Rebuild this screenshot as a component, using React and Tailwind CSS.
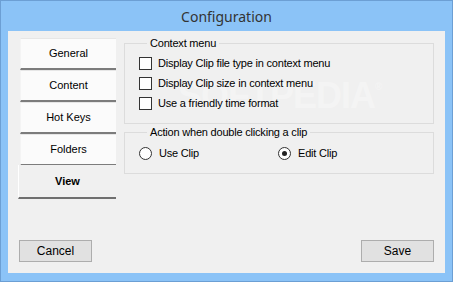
import React from 'react';

const font = { fontFamily: '"Liberation Sans", Arial, sans-serif' };

const Tab = ({ label, active }) => {
    if (active) {
        return (
            <div className="w-[98px] h-[34px] -mt-[1px] flex items-center justify-center bg-[#f0f0f0] border-l border-l-white border-b-2 border-b-[#6f6f6f] text-[11px] font-bold text-black">
                {label}
            </div>
        );
    }
    return (
        <div className="ml-[2px] w-[96px] h-[32px] flex items-center justify-center bg-[#fbfbfb] border-t border-t-[#e6e6e6] border-l border-l-[#f4f4f4] border-b-2 border-b-[#7c7c7c] text-[11px] text-black">
            {label}
        </div>
    );
};

const CheckRow = ({ label }) => (
    <div className="h-[20px] flex items-center">
        <span className="w-[13px] h-[13px] border border-[#333333] bg-white shrink-0" />
        <span className="ml-[6px]">{label}</span>
    </div>
);

const RadioRow = ({ label, checked }) => (
    <div className="h-[20px] flex items-center">
        <span className="w-[13px] h-[13px] rounded-full border border-[#333333] bg-white flex items-center justify-center shrink-0">
            {checked && <span className="w-[5px] h-[5px] rounded-full bg-[#222222]" />}
        </span>
        <span className="ml-[7px]">{label}</span>
    </div>
);

const Button = ({ label }) => (
    <div className="w-[73px] h-[22px] flex items-center justify-center bg-[#e1e1e1] border border-[#adadad] text-[12px] text-black">
        {label}
    </div>
);

const App = () => {
    return (
        <div
            className="w-[453px] h-[282px] bg-[#8bc3f7] border border-[#6c9fd4] flex flex-col"
            style={font}
        >
            <div
                className="h-[30px] flex items-center justify-center text-[14px] text-[#333333]"
                style={{ fontFamily: '"Noto Sans", "Open Sans", sans-serif' }}
            >
                Configuration
            </div>
            <div className="mx-[7px] h-[242px] bg-[#f0f0f0] flex flex-col relative overflow-hidden">
                {/* faint watermark, sits under the controls */}
                <div className="absolute left-[170px] top-[38px] text-[36px] font-bold tracking-[-1px] text-white opacity-30 pointer-events-none select-none">
                    SOFTPEDIA<sup className="text-[10px] align-super">®</sup>
                </div>
                <div className="relative flex pt-[5px] pl-[10px]">
                    <div className="w-[98px] mt-[2px] flex flex-col">
                        <Tab label="General" />
                        <Tab label="Content" />
                        <Tab label="Hot Keys" />
                        <Tab label="Folders" />
                        <Tab label="View" active />
                    </div>
                    <div className="ml-[8px] w-[310px] flex flex-col text-[11px] tracking-[-0.2px] text-black">
                        <fieldset className="border border-[#dcdcdc] pl-[14px] pt-[3px] pb-[10px]">
                            <legend className="ml-[8px] px-[3px] leading-[14px]">Context menu</legend>
                            <CheckRow label="Display Clip file type in context menu" />
                            <CheckRow label="Display Clip size in context menu" />
                            <CheckRow label="Use a friendly time format" />
                        </fieldset>
                        <fieldset className="mt-[1px] border border-[#dcdcdc] pl-[14px] pt-[4px] pb-[10px]">
                            <legend className="ml-[8px] px-[3px] leading-[14px]">Action when double clicking a clip</legend>
                            <div className="flex">
                                <div className="w-[139px]">
                                    <RadioRow label="Use Clip" />
                                </div>
                                <RadioRow label="Edit Clip" checked />
                            </div>
                        </fieldset>
                    </div>
                </div>
                <div className="relative mt-auto mb-[11px] px-[11px] flex justify-between">
                    <Button label="Cancel" />
                    <Button label="Save" />
                </div>
            </div>
        </div>
    );
};

export default App;
